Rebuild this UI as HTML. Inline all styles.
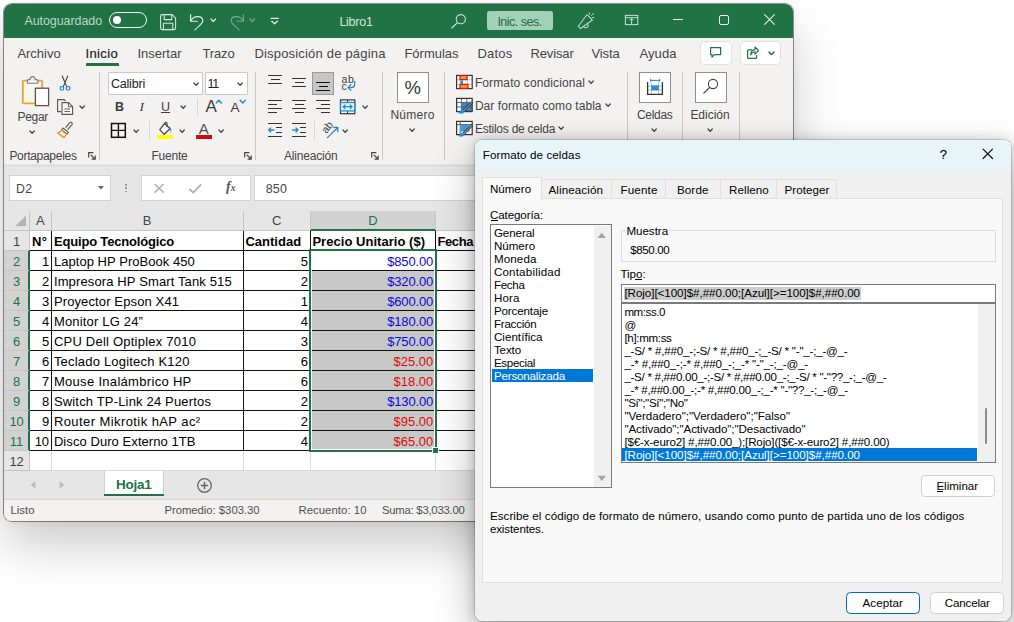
<!DOCTYPE html>
<html lang="es"><head><meta charset="utf-8"><title>Libro1 - Excel</title>
<style>
html,body{margin:0;padding:0}
body{width:1014px;height:622px;position:relative;overflow:hidden;background:#fff;font-family:"Liberation Sans",sans-serif;}
.b{position:absolute;display:block}
.t{position:absolute;white-space:pre;display:block}
#xlsh{position:absolute;left:4px;top:3.5px;width:789px;height:517.5px;border-radius:8px;box-shadow:0 0 0 1px rgba(0,0,0,.42),0 25px 50px rgba(0,0,0,.2),0 2px 10px rgba(0,0,0,.06);background:#f3f2f1}
#xl{position:absolute;left:4px;top:3.5px;width:789px;height:517.5px;border-radius:8px;overflow:hidden;background:#f3f2f1}
#xli{position:absolute;left:-4px;top:-3.5px;width:1014px;height:622px}
#dlsh{position:absolute;left:475px;top:139.6px;width:536px;height:481.6px;border-radius:8px;box-shadow:0 0 0 1px rgba(0,0,0,.13),0 16px 40px rgba(0,0,0,.3),0 0 12px rgba(0,0,0,.2);background:#f0f0f0}
#dl{position:absolute;left:475px;top:139.6px;width:536px;height:481.6px;border-radius:8px;overflow:hidden;background:#f0f0f0}
#dli{position:absolute;left:-475px;top:-139.6px;width:1014px;height:622px}
</style></head>
<body>
<div id="xlsh"></div>
<div id="xl"><div id="xli">
<div class="b" style="left:4px;top:3px;width:789px;height:35px;background:#217346;"></div>
<span class="t" style="top:12px;height:18px;line-height:18px;font-size:12.5px;color:#b8d7c6;left:24.40px;letter-spacing:-0.070px;">Autoguardado</span>
<div class="b" style="left:109px;top:12px;width:38px;height:16px;border:1.3px solid #eef5f1;border-radius:8px;box-sizing:border-box;"></div>
<div class="b" style="left:112.8px;top:15.8px;width:8.400000000000006px;height:8.399999999999999px;background:#fff;border-radius:50%;"></div>
<svg class="b" style="left:158.5px;top:13px;" width="18" height="18" viewBox="0 0 18 18"><path d="M1.6 3.1 Q1.6 1.6 3.1 1.6 H13.2 L16.6 5 V15.1 Q16.6 16.6 15.1 16.6 H3.1 Q1.6 16.6 1.6 15.1 Z M5.2 1.6 V6.6 H12.8 V1.6 M4.4 16.6 V10.2 H13.8 V16.6" fill="none" stroke="#d9e9e0" stroke-width="1.05" stroke-linejoin="round"/></svg>
<svg class="b" style="left:187px;top:12px;" width="20" height="20" viewBox="0 0 20 20"><path d="M3.6 2.6 V9.2 H10.2" fill="none" stroke="#e2eee8" stroke-width="1.15" stroke-linecap="round" stroke-linejoin="round"/><path d="M3.8 9 C6.5 3.4 15.6 3 15.8 8.8 C15.8 11.4 13.4 12.6 8 17.8" fill="none" stroke="#e2eee8" stroke-width="1.15" stroke-linecap="round"/></svg>
<svg class="b" style="left:209.9px;top:18.3px;" width="6.6" height="4.6" viewBox="0 0 6.6 4.6"><path d="M1 1 L3.3 3.6 L5.6 1" fill="none" stroke="#e2eee8" stroke-width="1.2" stroke-linecap="round" stroke-linejoin="round"/></svg>
<svg class="b" style="left:227px;top:12px;" width="20" height="20" viewBox="0 0 20 20"><path d="M16.4 2.6 V9.2 H9.8" fill="none" stroke="#73a88b" stroke-width="1.15" stroke-linecap="round" stroke-linejoin="round"/><path d="M16.2 9 C13.5 3.4 4.4 3 4.2 8.8 C4.2 11.4 6.6 12.6 12 17.8" fill="none" stroke="#73a88b" stroke-width="1.15" stroke-linecap="round"/></svg>
<svg class="b" style="left:248.5px;top:18.3px;" width="6.6" height="4.6" viewBox="0 0 6.6 4.6"><path d="M1 1 L3.3 3.6 L5.6 1" fill="none" stroke="#73a88b" stroke-width="1.2" stroke-linecap="round" stroke-linejoin="round"/></svg>
<svg class="b" style="left:269px;top:16px;" width="12" height="10" viewBox="0 0 12 10"><path d="M2 2.3 H9.2" stroke="#e2eee8" stroke-width="1.2" stroke-linecap="round"/><path d="M2.8 5.2 L5.6 7.8 L8.4 5.2" fill="none" stroke="#e2eee8" stroke-width="1.2" stroke-linecap="round" stroke-linejoin="round"/></svg>
<span class="t" style="top:13px;height:18px;line-height:18px;font-size:12.5px;color:#d3e6da;left:339.40px;letter-spacing:-0.258px;">Libro1</span>
<svg class="b" style="left:450px;top:13px;" width="18" height="16" viewBox="0 0 18 16"><circle cx="10.8" cy="6.2" r="4.6" fill="none" stroke="#cfe4d8" stroke-width="1.1"/><path d="M7.5 9.6 L1.8 15" stroke="#cfe4d8" stroke-width="1.15" stroke-linecap="round"/></svg>
<div class="b" style="left:487px;top:11px;width:65.5px;height:18.5px;background:#a3d0b8;border-radius:2.5px;"></div>
<span class="t" style="top:13px;height:18px;line-height:18px;font-size:12.5px;color:#1f6f43;left:497.40px;letter-spacing:-0.512px;">Inic. ses.</span>
<svg class="b" style="left:577px;top:11px;" width="19" height="19" viewBox="0 0 19 19"><path d="M1.3 15.3 L9.9 3.7 L15.4 9 L3.6 17.5 Z" fill="none" stroke="#bcd9c9" stroke-width="1.05" stroke-linejoin="round"/><path d="M6.6 15.5 A2.1 2.1 0 0 0 10.7 13.2" fill="none" stroke="#bcd9c9" stroke-width="1.05"/><path d="M12.3 1.8 L12.7 3.4 M14.5 4.6 L16.7 2.3 M15.3 6.5 L17 6.7" stroke="#bcd9c9" stroke-width="1" stroke-linecap="round"/></svg>
<svg class="b" style="left:624px;top:14px;" width="16" height="12" viewBox="0 0 16 12"><rect x="1.4" y="1.4" width="12.4" height="9.2" fill="none" stroke="#c3decf" stroke-width="1.05"/><path d="M1.4 3.7 H13.8 M7.6 10.4 V4.6 M5.8 6.3 L7.6 4.5 L9.4 6.3" fill="none" stroke="#c3decf" stroke-width="1"/></svg>
<div class="b" style="left:673px;top:18.7px;width:9.5px;height:1.1000000000000014px;background:#e4efe9;"></div>
<div class="b" style="left:719px;top:15px;width:9.5px;height:9.5px;border:1.1px solid #e4efe9;border-radius:2px;box-sizing:border-box;"></div>
<svg class="b" style="left:763px;top:13px;" width="13" height="13" viewBox="0 0 13 13"><path d="M1.6 1.6 L11.4 11.4 M11.4 1.6 L1.6 11.4" stroke="#e4efe9" stroke-width="1.1" stroke-linecap="round"/></svg>
<div class="b" style="left:4px;top:38px;width:789px;height:128px;background:#f3f2f1;"></div>
<span class="t" style="top:44px;height:19px;line-height:19px;font-size:13px;color:#444;left:17.40px;letter-spacing:-0.021px;">Archivo</span>
<span class="t" style="top:44px;height:19px;line-height:19px;font-size:13px;color:#444;left:137.40px;letter-spacing:0.016px;">Insertar</span>
<span class="t" style="top:44px;height:19px;line-height:19px;font-size:13px;color:#444;left:202.40px;letter-spacing:-0.110px;">Trazo</span>
<span class="t" style="top:44px;height:19px;line-height:19px;font-size:13px;color:#444;left:254.40px;letter-spacing:0.190px;">Disposición de página</span>
<span class="t" style="top:44px;height:19px;line-height:19px;font-size:13px;color:#444;left:404.40px;letter-spacing:0.003px;">Fórmulas</span>
<span class="t" style="top:44px;height:19px;line-height:19px;font-size:13px;color:#444;left:477.40px;letter-spacing:0.248px;">Datos</span>
<span class="t" style="top:44px;height:19px;line-height:19px;font-size:13px;color:#444;left:530.40px;letter-spacing:-0.124px;">Revisar</span>
<span class="t" style="top:44px;height:19px;line-height:19px;font-size:13px;color:#444;left:591.40px;letter-spacing:-0.094px;">Vista</span>
<span class="t" style="top:44px;height:19px;line-height:19px;font-size:13px;color:#444;left:639.40px;letter-spacing:0.114px;">Ayuda</span>
<span class="t" style="top:44px;height:19px;line-height:19px;font-size:13px;color:#222;left:85.40px;letter-spacing:0.392px;-webkit-text-stroke:0.2px #222;">Inicio</span>
<div class="b" style="left:86px;top:62.6px;width:32.5px;height:2.999999999999993px;background:#217346;border-radius:0.5px;"></div>
<div class="b" style="left:700px;top:41px;width:31.5px;height:23.5px;background:#fff;border:1px solid #e1e1e1;border-radius:4px;box-sizing:border-box;"></div>
<svg class="b" style="left:709px;top:46px;" width="14" height="13" viewBox="0 0 14 13"><path d="M1.6 1.6 H11.6 V8.6 H5.6 L3 11.2 V8.6 H1.6 Z" fill="none" stroke="#217346" stroke-width="1.2" stroke-linejoin="round"/></svg>
<div class="b" style="left:739.8px;top:41px;width:40.80000000000007px;height:23.5px;background:#fff;border:1px solid #e1e1e1;border-radius:4px;box-sizing:border-box;"></div>
<svg class="b" style="left:746px;top:45px;" width="14" height="15" viewBox="0 0 14 15"><path d="M5.6 4.8 H2.6 Q1.6 4.8 1.6 5.8 V12.4 Q1.6 13.4 2.6 13.4 H9.6 Q10.6 13.4 10.6 12.4 V10.4" fill="none" stroke="#217346" stroke-width="1.2" stroke-linecap="round"/><path d="M4.6 10 C4.8 6.6 6.6 4.8 9 4.6 V2 L12.6 5.6 L9 9.2 V6.8 C7 6.8 5.6 7.8 4.6 10 Z" fill="none" stroke="#217346" stroke-width="1.1" stroke-linejoin="round"/></svg>
<svg class="b" style="left:768.3px;top:50.6px;" width="7" height="4.8" viewBox="0 0 7 4.8"><path d="M1 1 L3.5 3.8 L6 1" fill="none" stroke="#217346" stroke-width="1.4" stroke-linecap="round" stroke-linejoin="round"/></svg>
<div class="b" style="left:99.0px;top:72px;width:1.0px;height:88px;background:#c8c8c8;"></div>
<div class="b" style="left:255.0px;top:72px;width:1.0px;height:88px;background:#c8c8c8;"></div>
<div class="b" style="left:381.5px;top:72px;width:1.0px;height:88px;background:#c8c8c8;"></div>
<div class="b" style="left:443.5px;top:72px;width:1.0px;height:88px;background:#c8c8c8;"></div>
<div class="b" style="left:626.5px;top:72px;width:1.0px;height:88px;background:#c8c8c8;"></div>
<div class="b" style="left:682.0px;top:72px;width:1.0px;height:88px;background:#c8c8c8;"></div>
<div class="b" style="left:738.5px;top:72px;width:1.0px;height:88px;background:#c8c8c8;"></div>
<svg class="b" style="left:20px;top:74px;" width="31" height="34" viewBox="0 0 31 34"><rect x="2.8" y="6.6" width="19.4" height="22.8" rx="0.8" fill="#fbf6ec"/><path d="M8.4 6.6 H3.6 Q2.8 6.6 2.8 7.4 V28.6 Q2.8 29.4 3.6 29.4 H15" fill="none" stroke="#e8a33d" stroke-width="1.8"/><path d="M17 6.6 H21.4 Q22.2 6.6 22.2 7.4 V14" fill="none" stroke="#e8a33d" stroke-width="1.8"/><path d="M7.4 9.2 V6.6 Q7.4 5.6 8.4 5.6 H10 Q10.2 2.6 12.6 2.6 Q15 2.6 15.2 5.6 H16.8 Q17.8 5.6 17.8 6.6 V9.2 Z" fill="#f3f3f3" stroke="#7a7a7a" stroke-width="1.1" stroke-linejoin="round"/><rect x="15.4" y="14.2" width="13.2" height="17.4" fill="#fff" stroke="#555" stroke-width="1.3"/></svg>
<span class="t" style="top:108px;height:18px;line-height:18px;font-size:12px;color:#444;left:17.40px;letter-spacing:-0.264px;">Pegar</span>
<svg class="b" style="left:29.15px;top:130.2px;" width="6.3" height="4.4" viewBox="0 0 6.3 4.4"><path d="M1 1 L3.15 3.4 L5.3 1" fill="none" stroke="#444" stroke-width="1.3" stroke-linecap="round" stroke-linejoin="round"/></svg>
<svg class="b" style="left:58px;top:74px;" width="14" height="18" viewBox="0 0 14 18"><path d="M4.2 2 L8.6 12.4 M9.8 2 L5.4 12.4" stroke="#444" stroke-width="1.1" stroke-linecap="round"/><rect x="2.2" y="12.6" width="3.4" height="3.4" rx="1" fill="none" stroke="#1e8bcd" stroke-width="1.2"/><rect x="8.4" y="12.6" width="3.4" height="3.4" rx="1" fill="none" stroke="#1e8bcd" stroke-width="1.2"/></svg>
<svg class="b" style="left:56px;top:98px;" width="18" height="18" viewBox="0 0 18 18"><path d="M5 13.6 H1.6 V1.6 H8 L9.6 3.2" fill="none" stroke="#555" stroke-width="1.1"/><path d="M6 4.6 H12.6 L16.6 8.6 V16.4 H6 Z" fill="#fff" stroke="#555" stroke-width="1.1" stroke-linejoin="round"/><path d="M12.4 4.8 V8.8 H16.4" fill="none" stroke="#555" stroke-width="1"/><path d="M8.4 11 H14 M8.4 13.6 H14" stroke="#555" stroke-width="1"/></svg>
<svg class="b" style="left:79.35px;top:104.8px;" width="6.3" height="4.4" viewBox="0 0 6.3 4.4"><path d="M1 1 L3.15 3.4 L5.3 1" fill="none" stroke="#444" stroke-width="1.3" stroke-linecap="round" stroke-linejoin="round"/></svg>
<svg class="b" style="left:56px;top:121px;" width="18" height="18" viewBox="0 0 18 18"><path d="M9.6 6.6 L13.8 1.6 Q15 0.8 16 1.8 Q16.8 2.8 15.8 3.8 L11.6 8.6" fill="none" stroke="#555" stroke-width="1.1" stroke-linejoin="round"/><path d="M7 7 L12.4 11.4 L11 13 L5.6 8.6 Z" fill="#fff" stroke="#555" stroke-width="1.1" stroke-linejoin="round"/><path d="M5.4 9 L10.6 13.2 L8 16.6 L1.6 12 Q4.4 11.6 5.4 9 Z" fill="none" stroke="#e8913d" stroke-width="1.3" stroke-linejoin="round"/></svg>
<span class="t" style="top:147px;height:18px;line-height:18px;font-size:12px;color:#444;left:9.40px;letter-spacing:-0.293px;">Portapapeles</span>
<svg class="b" style="left:87.5px;top:152px;" width="9" height="9" viewBox="0 0 9 9"><path d="M0.7 5.4 V0.7 H5.4" fill="none" stroke="#444" stroke-width="1.2"/><path d="M2.8 2.8 L7 7 M7.2 3.6 V7.2 H3.6" fill="none" stroke="#444" stroke-width="1.2"/></svg>
<div class="b" style="left:108px;top:72.3px;width:94.5px;height:22.400000000000006px;background:#fff;border:1px solid #c9c9c9;box-sizing:border-box;border-radius:1px;"></div>
<span class="t" style="top:75px;height:18px;line-height:18px;font-size:12.5px;color:#222;left:110.90px;letter-spacing:-0.175px;">Calibri</span>
<svg class="b" style="left:192.85px;top:82.1px;" width="6.3" height="4.4" viewBox="0 0 6.3 4.4"><path d="M1 1 L3.15 3.4 L5.3 1" fill="none" stroke="#444" stroke-width="1.3" stroke-linecap="round" stroke-linejoin="round"/></svg>
<div class="b" style="left:205.3px;top:72.3px;width:42.39999999999998px;height:22.400000000000006px;background:#fff;border:1px solid #c9c9c9;box-sizing:border-box;border-radius:1px;"></div>
<span class="t" style="top:75px;height:18px;line-height:18px;font-size:12.5px;color:#222;left:207.40px;letter-spacing:-1.2px;">11</span>
<svg class="b" style="left:237.45px;top:82.1px;" width="6.3" height="4.4" viewBox="0 0 6.3 4.4"><path d="M1 1 L3.15 3.4 L5.3 1" fill="none" stroke="#444" stroke-width="1.3" stroke-linecap="round" stroke-linejoin="round"/></svg>
<span class="t" style="top:98px;height:18px;line-height:18px;font-size:12.5px;color:#3b3b3b;font-weight:700;left:114.90px;letter-spacing:-0.827px;">B</span>
<span class="t" style="top:97px;height:19px;line-height:19px;font-size:13.5px;color:#3b3b3b;font-style:italic;font-family:&quot;Liberation Serif&quot;,serif;left:139.40px;">I</span>
<span class="t" style="top:98px;height:18px;line-height:18px;font-size:12.5px;color:#3b3b3b;left:161.00px;letter-spacing:0.173px;">U</span>
<div class="b" style="left:161px;top:112.4px;width:9.400000000000006px;height:1.0px;background:#3b3b3b;"></div>
<svg class="b" style="left:180.45px;top:104.8px;" width="6.3" height="4.4" viewBox="0 0 6.3 4.4"><path d="M1 1 L3.15 3.4 L5.3 1" fill="none" stroke="#444" stroke-width="1.3" stroke-linecap="round" stroke-linejoin="round"/></svg>
<div class="b" style="left:196.5px;top:97.5px;width:1.0px;height:18.5px;background:#d6d6d6;"></div>
<span class="t" style="top:95px;height:23px;line-height:23px;font-size:17px;color:#3b3b3b;left:205.40px;letter-spacing:1.061px;">A</span>
<svg class="b" style="left:215px;top:99.4px;" width="8" height="5" viewBox="0 0 8 5"><path d="M1.2 4 L3.8 1.2 L6.4 4" fill="none" stroke="#1e8bcd" stroke-width="1.4" stroke-linecap="round" stroke-linejoin="round"/></svg>
<span class="t" style="top:98px;height:19px;line-height:19px;font-size:13.5px;color:#3b3b3b;left:230.40px;letter-spacing:1.695px;">A</span>
<svg class="b" style="left:239px;top:99.4px;" width="8" height="5" viewBox="0 0 8 5"><path d="M1.2 1.2 L3.8 4 L6.4 1.2" fill="none" stroke="#1e8bcd" stroke-width="1.4" stroke-linecap="round" stroke-linejoin="round"/></svg>
<svg class="b" style="left:110px;top:122px;" width="17" height="17" viewBox="0 0 17 17"><rect x="1.5" y="1.5" width="13.8" height="13.8" fill="none" stroke="#111" stroke-width="1.5"/><path d="M8.4 1.4 V15.2 M1.4 8.4 H15.2" stroke="#111" stroke-width="1.4"/></svg>
<svg class="b" style="left:133.45px;top:129.1px;" width="6.3" height="4.4" viewBox="0 0 6.3 4.4"><path d="M1 1 L3.15 3.4 L5.3 1" fill="none" stroke="#444" stroke-width="1.3" stroke-linecap="round" stroke-linejoin="round"/></svg>
<div class="b" style="left:148.5px;top:121px;width:1.0px;height:19px;background:#d6d6d6;"></div>
<svg class="b" style="left:158px;top:121px;" width="16" height="15" viewBox="0 0 16 15"><path d="M1.7 8.7 L6.7 2.5 L11.9 7.7 L6.2 13.3 Z" fill="#fafafa" stroke="#444" stroke-width="1.2" stroke-linejoin="round"/><path d="M6.7 2.6 C6.8 0.9 9.1 0.9 9.1 2.8 V5.6" fill="none" stroke="#444" stroke-width="1.1" stroke-linecap="round"/><path d="M11.4 5.4 C13.6 7 14 10 12.6 12.2 C12.8 9.8 12.4 8.4 10.8 7 Z" fill="#1e8bcd"/></svg>
<div class="b" style="left:157px;top:135px;width:15.800000000000011px;height:4px;background:#ffff00;"></div>
<svg class="b" style="left:178.85px;top:129.1px;" width="6.3" height="4.4" viewBox="0 0 6.3 4.4"><path d="M1 1 L3.15 3.4 L5.3 1" fill="none" stroke="#444" stroke-width="1.3" stroke-linecap="round" stroke-linejoin="round"/></svg>
<span class="t" style="top:118px;height:21px;line-height:21px;font-size:15px;color:#505050;left:198.80px;letter-spacing:0.595px;">A</span>
<div class="b" style="left:195.8px;top:135px;width:16.0px;height:4px;background:#cf0a0a;"></div>
<svg class="b" style="left:218.25px;top:129.1px;" width="6.3" height="4.4" viewBox="0 0 6.3 4.4"><path d="M1 1 L3.15 3.4 L5.3 1" fill="none" stroke="#444" stroke-width="1.3" stroke-linecap="round" stroke-linejoin="round"/></svg>
<span class="t" style="top:147px;height:18px;line-height:18px;font-size:12px;color:#444;left:151.40px;letter-spacing:-0.193px;">Fuente</span>
<svg class="b" style="left:244px;top:152px;" width="9" height="9" viewBox="0 0 9 9"><path d="M0.7 5.4 V0.7 H5.4" fill="none" stroke="#444" stroke-width="1.2"/><path d="M2.8 2.8 L7 7 M7.2 3.6 V7.2 H3.6" fill="none" stroke="#444" stroke-width="1.2"/></svg>
<svg class="b" style="left:267px;top:74px;" width="16" height="16" viewBox="0 0 16 16"><path d="M1 1.5 H15" stroke="#333" stroke-width="1" shape-rendering="crispEdges"/><path d="M3.5 5.5 H12.5" stroke="#333" stroke-width="1" shape-rendering="crispEdges"/><path d="M1 9.5 H15" stroke="#333" stroke-width="1" shape-rendering="crispEdges"/></svg>
<svg class="b" style="left:291px;top:74px;" width="16" height="16" viewBox="0 0 16 16"><path d="M1 4.5 H15" stroke="#333" stroke-width="1" shape-rendering="crispEdges"/><path d="M3.5 8.5 H12.5" stroke="#333" stroke-width="1" shape-rendering="crispEdges"/><path d="M1 12.5 H15" stroke="#333" stroke-width="1" shape-rendering="crispEdges"/></svg>
<div class="b" style="left:312px;top:72px;width:22px;height:22.700000000000003px;background:#c6c6c6;border:1px solid #9a9a9a;box-sizing:border-box;"></div>
<svg class="b" style="left:315px;top:74px;" width="16" height="20" viewBox="0 0 16 20"><path d="M1 8.5 H15" stroke="#111" stroke-width="1.3" shape-rendering="crispEdges"/><path d="M3.5 12.5 H12.5" stroke="#111" stroke-width="1.3" shape-rendering="crispEdges"/><path d="M1 16.5 H15" stroke="#111" stroke-width="1.3" shape-rendering="crispEdges"/></svg>
<span class="t" style="top:71px;height:16px;line-height:16px;font-size:10.5px;color:#3b3b3b;left:341.40px;letter-spacing:0.760px;">ab</span>
<span class="t" style="top:78px;height:16px;line-height:16px;font-size:10.5px;color:#3b3b3b;left:341.40px;letter-spacing:0.950px;">c</span>
<svg class="b" style="left:346px;top:80px;" width="11" height="12" viewBox="0 0 11 12"><path d="M8.6 1 V4.6 Q8.6 7.6 5.6 7.6 H2.4" fill="none" stroke="#1e8bcd" stroke-width="1.3"/><path d="M4.8 4.8 L2 7.6 L4.8 10.4" fill="none" stroke="#1e8bcd" stroke-width="1.3" stroke-linecap="round" stroke-linejoin="round"/></svg>
<svg class="b" style="left:267px;top:99px;" width="16" height="16" viewBox="0 0 16 16"><path d="M1 1.5 H15" stroke="#333" stroke-width="1" shape-rendering="crispEdges"/><path d="M1 5.5 H10" stroke="#333" stroke-width="1" shape-rendering="crispEdges"/><path d="M1 9.5 H15" stroke="#333" stroke-width="1" shape-rendering="crispEdges"/><path d="M1 13.5 H10" stroke="#333" stroke-width="1" shape-rendering="crispEdges"/></svg>
<svg class="b" style="left:291px;top:99px;" width="16" height="16" viewBox="0 0 16 16"><path d="M1 1.5 H15" stroke="#333" stroke-width="1" shape-rendering="crispEdges"/><path d="M3.5 5.5 H12.5" stroke="#333" stroke-width="1" shape-rendering="crispEdges"/><path d="M1 9.5 H15" stroke="#333" stroke-width="1" shape-rendering="crispEdges"/><path d="M3.5 13.5 H12.5" stroke="#333" stroke-width="1" shape-rendering="crispEdges"/></svg>
<svg class="b" style="left:315px;top:99px;" width="16" height="16" viewBox="0 0 16 16"><path d="M1 1.5 H15" stroke="#333" stroke-width="1" shape-rendering="crispEdges"/><path d="M6 5.5 H15" stroke="#333" stroke-width="1" shape-rendering="crispEdges"/><path d="M1 9.5 H15" stroke="#333" stroke-width="1" shape-rendering="crispEdges"/><path d="M6 13.5 H15" stroke="#333" stroke-width="1" shape-rendering="crispEdges"/></svg>
<svg class="b" style="left:339px;top:99px;" width="17" height="16" viewBox="0 0 17 16"><rect x="1.5" y="0.9" width="14.3" height="13.8" fill="#fff" stroke="#333" stroke-width="1.2"/><path d="M8.6 0.9 V3.4 M8.6 11.9 V14.7" stroke="#333" stroke-width="1.1"/><rect x="1.5" y="3.5" width="14.3" height="8.4" fill="#e6f2fc" stroke="#1e8bcd" stroke-width="1.3"/><path d="M4.2 7.7 H13 M6 5.9 L4.2 7.7 L6 9.5 M11.2 5.9 L13 7.7 L11.2 9.5" fill="none" stroke="#1e8bcd" stroke-width="1.3" stroke-linecap="round" stroke-linejoin="round"/></svg>
<svg class="b" style="left:362.05px;top:104.8px;" width="6.3" height="4.4" viewBox="0 0 6.3 4.4"><path d="M1 1 L3.15 3.4 L5.3 1" fill="none" stroke="#444" stroke-width="1.3" stroke-linecap="round" stroke-linejoin="round"/></svg>
<svg class="b" style="left:267px;top:122px;" width="16" height="16" viewBox="0 0 16 16"><path d="M1 1.5 H15 M9 5.5 H15 M9 10.5 H15 M1 14.5 H15" stroke="#333" stroke-width="1" shape-rendering="crispEdges"/><path d="M1.6 8 H7 M3.6 6 L1.6 8 L3.6 10" fill="none" stroke="#1e8bcd" stroke-width="1.3" stroke-linecap="round" stroke-linejoin="round"/></svg>
<svg class="b" style="left:291px;top:122px;" width="16" height="16" viewBox="0 0 16 16"><path d="M1 1.5 H15 M9 5.5 H15 M9 10.5 H15 M1 14.5 H15" stroke="#333" stroke-width="1" shape-rendering="crispEdges"/><path d="M1.6 8 H7 M5 6 L7 8 L5 10" fill="none" stroke="#1e8bcd" stroke-width="1.3" stroke-linecap="round" stroke-linejoin="round"/></svg>
<div class="b" style="left:313.5px;top:121px;width:1.0px;height:19px;background:#d6d6d6;"></div>
<span class="t" style="left:321px;top:121px;font-size:10.5px;color:#3b3b3b;transform:rotate(-52deg);transform-origin:50% 50%;line-height:12px;">ab</span>
<svg class="b" style="left:326px;top:123px;" width="14" height="16" viewBox="0 0 14 16"><path d="M1.4 14.6 L11.4 4.8 M7.6 4.4 H11.8 V8.6" fill="none" stroke="#1e8bcd" stroke-width="1.3" stroke-linecap="round" stroke-linejoin="round"/></svg>
<svg class="b" style="left:342.35px;top:129.1px;" width="6.3" height="4.4" viewBox="0 0 6.3 4.4"><path d="M1 1 L3.15 3.4 L5.3 1" fill="none" stroke="#444" stroke-width="1.3" stroke-linecap="round" stroke-linejoin="round"/></svg>
<span class="t" style="top:147px;height:18px;line-height:18px;font-size:12px;color:#444;left:283.90px;letter-spacing:-0.167px;">Alineación</span>
<svg class="b" style="left:370.5px;top:152px;" width="9" height="9" viewBox="0 0 9 9"><path d="M0.7 5.4 V0.7 H5.4" fill="none" stroke="#444" stroke-width="1.2"/><path d="M2.8 2.8 L7 7 M7.2 3.6 V7.2 H3.6" fill="none" stroke="#444" stroke-width="1.2"/></svg>
<div class="b" style="left:397px;top:72px;width:31.5px;height:31px;background:#fff;border:1px solid #8f8f8f;box-sizing:border-box;"></div>
<span class="t" style="top:75px;height:25px;line-height:25px;font-size:18.5px;color:#333;left:404.40px;letter-spacing:-0.249px;">%</span>
<span class="t" style="top:106px;height:18px;line-height:18px;font-size:12px;color:#444;left:390.40px;letter-spacing:0.253px;">Número</span>
<svg class="b" style="left:408.65px;top:128.1px;" width="6.3" height="4.4" viewBox="0 0 6.3 4.4"><path d="M1 1 L3.15 3.4 L5.3 1" fill="none" stroke="#444" stroke-width="1.3" stroke-linecap="round" stroke-linejoin="round"/></svg>
<svg class="b" style="left:455px;top:74px;" width="19" height="16" viewBox="0 0 19 16"><rect x="1.6" y="1.4" width="15.6" height="13.2" fill="#fff"/><path d="M5 1.4 V14.6 M12.4 1.4 V14.6 M1.6 5.8 H17.2 M1.6 10.2 H17.2" stroke="#bdbdbd" stroke-width="0.9"/><rect x="1.6" y="1.4" width="15.6" height="13.2" fill="none" stroke="#333" stroke-width="1.2"/><rect x="5" y="1.6" width="7" height="4" fill="#f0a030" stroke="#e01515" stroke-width="1.2"/><rect x="5.4" y="6.4" width="2.6" height="3.4" fill="#2b8de0"/><rect x="5" y="10.4" width="8" height="4" fill="#f0a030" stroke="#e01515" stroke-width="1.2"/></svg>
<svg class="b" style="left:455px;top:97px;" width="19" height="19" viewBox="0 0 19 19"><rect x="1.6" y="1.4" width="15.6" height="13.2" fill="#fff"/><rect x="6.6" y="5.6" width="10.4" height="8.8" fill="#2b8de0"/><path d="M6.4 1.4 V14.6 M11.8 1.4 V14.6 M1.6 5.4 H17.2 M1.6 10 H17.2" stroke="#555" stroke-width="0.9"/><rect x="1.6" y="1.4" width="15.6" height="13.2" fill="none" stroke="#333" stroke-width="1.2"/><path d="M16.6 4.6 L17.8 5.8 L9.6 14 L8 12.6 Z" fill="#8a8a8a" stroke="#333" stroke-width="0.9" stroke-linejoin="round"/><path d="M8.2 12.4 Q5.8 12.2 5.2 14 Q4.6 15.6 2.8 15.8 Q6.4 17.6 8.8 15.8 Q10.4 14.4 9.6 13.8 Z" fill="#2b8de0"/></svg>
<svg class="b" style="left:455px;top:120px;" width="19" height="19" viewBox="0 0 19 19"><rect x="1.6" y="1.4" width="15.6" height="13.2" fill="#fff"/><path d="M5.2 1.4 V14.6 M1.6 4.6 H17.2" stroke="#555" stroke-width="0.9"/><rect x="5.6" y="5" width="9" height="6.6" fill="#3f9ae6"/><rect x="1.6" y="1.4" width="15.6" height="13.2" fill="none" stroke="#333" stroke-width="1.2"/><path d="M16.6 4.6 L17.8 5.8 L9.6 14 L8 12.6 Z" fill="#8a8a8a" stroke="#333" stroke-width="0.9" stroke-linejoin="round"/><path d="M8.2 12.4 Q5.8 12.2 5.2 14 Q4.6 15.6 2.8 15.8 Q6.4 17.6 8.8 15.8 Q10.4 14.4 9.6 13.8 Z" fill="#2b8de0"/></svg>
<span class="t" style="top:74px;height:18px;line-height:18px;font-size:12px;color:#444;left:474.90px;letter-spacing:0.113px;">Formato condicional</span>
<svg class="b" style="left:587.85px;top:80.2px;" width="6.3" height="4.4" viewBox="0 0 6.3 4.4"><path d="M1 1 L3.15 3.4 L5.3 1" fill="none" stroke="#444" stroke-width="1.3" stroke-linecap="round" stroke-linejoin="round"/></svg>
<span class="t" style="top:97px;height:18px;line-height:18px;font-size:12px;color:#444;left:474.90px;letter-spacing:0.060px;">Dar formato como tabla</span>
<svg class="b" style="left:604.85px;top:103.2px;" width="6.3" height="4.4" viewBox="0 0 6.3 4.4"><path d="M1 1 L3.15 3.4 L5.3 1" fill="none" stroke="#444" stroke-width="1.3" stroke-linecap="round" stroke-linejoin="round"/></svg>
<span class="t" style="top:120px;height:18px;line-height:18px;font-size:12px;color:#444;left:474.90px;letter-spacing:-0.240px;">Estilos de celda</span>
<svg class="b" style="left:557.85px;top:126.2px;" width="6.3" height="4.4" viewBox="0 0 6.3 4.4"><path d="M1 1 L3.15 3.4 L5.3 1" fill="none" stroke="#444" stroke-width="1.3" stroke-linecap="round" stroke-linejoin="round"/></svg>
<div class="b" style="left:639px;top:72px;width:32px;height:31px;background:#fff;border:1px solid #8f8f8f;box-sizing:border-box;"></div>
<svg class="b" style="left:646px;top:78px;" width="18" height="18" viewBox="0 0 18 18"><path d="M4.6 2.4 H13.6 M4.6 1 V3.8 M13.6 1 V3.8" stroke="#1e8bcd" stroke-width="1"/><path d="M5.4 4.4 V16 M12.6 4.4 V16 M1.6 8 H16.4 M1.6 12 H16.4" stroke="#b5b5b5" stroke-width="0.9"/><rect x="5.2" y="7.4" width="7.6" height="5" fill="#2b8de0"/><path d="M1.6 4 V16.4 H16.4 V4" fill="none" stroke="#333" stroke-width="1.3"/></svg>
<span class="t" style="top:106px;height:18px;line-height:18px;font-size:12px;color:#444;left:636.90px;letter-spacing:-0.276px;">Celdas</span>
<svg class="b" style="left:651.05px;top:128.1px;" width="6.3" height="4.4" viewBox="0 0 6.3 4.4"><path d="M1 1 L3.15 3.4 L5.3 1" fill="none" stroke="#444" stroke-width="1.3" stroke-linecap="round" stroke-linejoin="round"/></svg>
<div class="b" style="left:695px;top:72px;width:31.5px;height:31px;background:#fff;border:1px solid #8f8f8f;box-sizing:border-box;"></div>
<svg class="b" style="left:702px;top:78px;" width="18" height="17" viewBox="0 0 18 17"><circle cx="11" cy="6" r="4.6" fill="none" stroke="#444" stroke-width="1.1"/><path d="M7.6 9.4 L1.8 15.2" stroke="#444" stroke-width="1.2" stroke-linecap="round"/></svg>
<span class="t" style="top:106px;height:18px;line-height:18px;font-size:12px;color:#444;left:690.40px;letter-spacing:-0.022px;">Edición</span>
<svg class="b" style="left:706.85px;top:128.1px;" width="6.3" height="4.4" viewBox="0 0 6.3 4.4"><path d="M1 1 L3.15 3.4 L5.3 1" fill="none" stroke="#444" stroke-width="1.3" stroke-linecap="round" stroke-linejoin="round"/></svg>
<div class="b" style="left:4px;top:163.5px;width:789px;height:1.0px;background:#e3e3e3;"></div>
<div class="b" style="left:4px;top:165px;width:789px;height:46px;background:#e6e6e6;"></div>
<div class="b" style="left:4px;top:164.5px;width:789px;height:2.5px;background:linear-gradient(#d9d9d9,#e6e6e6);"></div>
<div class="b" style="left:9px;top:175px;width:101.5px;height:25.5px;background:#fff;border:1px solid #d2d2d2;box-sizing:border-box;"></div>
<span class="t" style="top:180px;height:18px;line-height:18px;font-size:12.3px;color:#444;left:15.90px;letter-spacing:0.388px;">D2</span>
<svg class="b" style="left:97px;top:185px;" width="8" height="6" viewBox="0 0 8 6"><path d="M0.8 1 H7 L3.9 4.6 Z" fill="#666"/></svg>
<div class="b" style="left:125.4px;top:184.2px;width:1.3999999999999915px;height:1.4000000000000057px;background:#9a9a9a;"></div>
<div class="b" style="left:125.4px;top:187.4px;width:1.3999999999999915px;height:1.4000000000000057px;background:#9a9a9a;"></div>
<div class="b" style="left:125.4px;top:190.6px;width:1.3999999999999915px;height:1.4000000000000057px;background:#9a9a9a;"></div>
<div class="b" style="left:141px;top:175px;width:109.5px;height:25.5px;background:#fff;border:1px solid #d2d2d2;box-sizing:border-box;"></div>
<svg class="b" style="left:153px;top:183px;" width="13" height="11" viewBox="0 0 13 11"><path d="M1.6 1 L10.6 9.6 M10.6 1 L1.6 9.6" stroke="#b0b0b0" stroke-width="1.6"/></svg>
<svg class="b" style="left:188px;top:183px;" width="15" height="11" viewBox="0 0 15 11"><path d="M1.4 6 L5.2 9.6 L13.2 1.4" fill="none" stroke="#b0b0b0" stroke-width="1.8"/></svg>
<span class="t" style="top:177px;height:20px;line-height:20px;font-size:14px;color:#555;font-weight:700;font-style:italic;font-family:&quot;Liberation Serif&quot;,serif;left:225.90px;">f</span>
<span class="t" style="top:181px;height:15px;line-height:15px;font-size:9.5px;color:#555;font-weight:700;font-style:italic;font-family:&quot;Liberation Serif&quot;,serif;left:230.80px;">x</span>
<div class="b" style="left:254px;top:175px;width:539px;height:25.5px;background:#fff;border:1px solid #d2d2d2;box-sizing:border-box;"></div>
<span class="t" style="top:180px;height:18px;line-height:18px;font-size:12.5px;color:#444;left:265.70px;letter-spacing:0.215px;">850</span>
<div class="b" style="left:4px;top:211px;width:789px;height:260px;background:#fff;"></div>
<div class="b" style="left:4px;top:211px;width:789px;height:19px;background:#e6e6e6;"></div>
<div class="b" style="left:4px;top:230px;width:789px;height:1px;background:#c6c6c6;"></div>
<div class="b" style="left:4px;top:231px;width:25px;height:240px;background:#e6e6e6;"></div>
<div class="b" style="left:29px;top:231px;width:1px;height:240px;background:#c6c6c6;"></div>
<div class="b" style="left:4px;top:251px;width:24px;height:200px;background:#d2d2d2;"></div>
<div class="b" style="left:28px;top:250px;width:2px;height:201px;background:#217346;"></div>
<div class="b" style="left:310px;top:211px;width:125px;height:18px;background:#d2d2d2;"></div>
<div class="b" style="left:310px;top:229px;width:126px;height:2px;background:#217346;"></div>
<div class="b" style="left:29px;top:211px;width:1px;height:19px;background:#c6c6c6;"></div>
<div class="b" style="left:51px;top:211px;width:1px;height:19px;background:#c6c6c6;"></div>
<div class="b" style="left:243px;top:211px;width:1px;height:19px;background:#c6c6c6;"></div>
<div class="b" style="left:310px;top:211px;width:1px;height:19px;background:#c6c6c6;"></div>
<div class="b" style="left:435px;top:211px;width:1px;height:19px;background:#c6c6c6;"></div>
<svg class="b" style="left:14px;top:215px;" width="13" height="12" viewBox="0 0 13 12"><path d="M12 0.6 V11.2 H1.2 Z" fill="#b4b4b4"/></svg>
<span class="t" style="top:211px;height:19px;line-height:19px;font-size:13px;color:#444;left:-59.70px;width:200px;text-align:center;">A</span>
<span class="t" style="top:211px;height:19px;line-height:19px;font-size:13px;color:#444;left:47.00px;width:200px;text-align:center;">B</span>
<span class="t" style="top:211px;height:19px;line-height:19px;font-size:13px;color:#444;left:176.80px;width:200px;text-align:center;">C</span>
<span class="t" style="top:211px;height:19px;line-height:19px;font-size:13px;color:#217346;left:273.00px;width:200px;text-align:center;">D</span>
<div class="b" style="left:4px;top:250px;width:25px;height:1px;background:#c6c6c6;"></div>
<div class="b" style="left:4px;top:270px;width:25px;height:1px;background:#c6c6c6;"></div>
<div class="b" style="left:4px;top:290px;width:25px;height:1px;background:#c6c6c6;"></div>
<div class="b" style="left:4px;top:310px;width:25px;height:1px;background:#c6c6c6;"></div>
<div class="b" style="left:4px;top:330px;width:25px;height:1px;background:#c6c6c6;"></div>
<div class="b" style="left:4px;top:350px;width:25px;height:1px;background:#c6c6c6;"></div>
<div class="b" style="left:4px;top:370px;width:25px;height:1px;background:#c6c6c6;"></div>
<div class="b" style="left:4px;top:390px;width:25px;height:1px;background:#c6c6c6;"></div>
<div class="b" style="left:4px;top:410px;width:25px;height:1px;background:#c6c6c6;"></div>
<div class="b" style="left:4px;top:430px;width:25px;height:1px;background:#c6c6c6;"></div>
<div class="b" style="left:4px;top:450px;width:25px;height:1px;background:#c6c6c6;"></div>
<div class="b" style="left:4px;top:470px;width:25px;height:1px;background:#c6c6c6;"></div>
<span class="t" style="top:232px;height:19px;line-height:19px;font-size:13px;color:#444;left:-83.40px;width:200px;text-align:center;">1</span>
<span class="t" style="top:252px;height:19px;line-height:19px;font-size:13px;color:#217346;left:-83.40px;width:200px;text-align:center;">2</span>
<span class="t" style="top:272px;height:19px;line-height:19px;font-size:13px;color:#217346;left:-83.40px;width:200px;text-align:center;">3</span>
<span class="t" style="top:292px;height:19px;line-height:19px;font-size:13px;color:#217346;left:-83.40px;width:200px;text-align:center;">4</span>
<span class="t" style="top:312px;height:19px;line-height:19px;font-size:13px;color:#217346;left:-83.40px;width:200px;text-align:center;">5</span>
<span class="t" style="top:332px;height:19px;line-height:19px;font-size:13px;color:#217346;left:-83.40px;width:200px;text-align:center;">6</span>
<span class="t" style="top:352px;height:19px;line-height:19px;font-size:13px;color:#217346;left:-83.40px;width:200px;text-align:center;">7</span>
<span class="t" style="top:372px;height:19px;line-height:19px;font-size:13px;color:#217346;left:-83.40px;width:200px;text-align:center;">8</span>
<span class="t" style="top:392px;height:19px;line-height:19px;font-size:13px;color:#217346;left:-83.40px;width:200px;text-align:center;">9</span>
<span class="t" style="top:412px;height:19px;line-height:19px;font-size:13px;color:#217346;left:-83.40px;width:200px;text-align:center;">10</span>
<span class="t" style="top:432px;height:19px;line-height:19px;font-size:13px;color:#217346;left:-83.40px;width:200px;text-align:center;">11</span>
<span class="t" style="top:452px;height:19px;line-height:19px;font-size:13px;color:#444;left:-83.40px;width:200px;text-align:center;">12</span>
<div class="b" style="left:51px;top:451px;width:1px;height:20px;background:#d8d8d8;"></div>
<div class="b" style="left:243px;top:451px;width:1px;height:20px;background:#d8d8d8;"></div>
<div class="b" style="left:310px;top:451px;width:1px;height:20px;background:#d8d8d8;"></div>
<div class="b" style="left:435px;top:451px;width:1px;height:20px;background:#d8d8d8;"></div>
<div class="b" style="left:30px;top:470px;width:763px;height:1px;background:#d8d8d8;"></div>
<div class="b" style="left:312px;top:271px;width:122px;height:178px;background:#c8c8c8;"></div>
<div class="b" style="left:30px;top:250px;width:763px;height:1px;background:#111;"></div>
<div class="b" style="left:30px;top:270px;width:763px;height:1px;background:#111;"></div>
<div class="b" style="left:30px;top:290px;width:763px;height:1px;background:#111;"></div>
<div class="b" style="left:30px;top:310px;width:763px;height:1px;background:#111;"></div>
<div class="b" style="left:30px;top:330px;width:763px;height:1px;background:#111;"></div>
<div class="b" style="left:30px;top:350px;width:763px;height:1px;background:#111;"></div>
<div class="b" style="left:30px;top:370px;width:763px;height:1px;background:#111;"></div>
<div class="b" style="left:30px;top:390px;width:763px;height:1px;background:#111;"></div>
<div class="b" style="left:30px;top:410px;width:763px;height:1px;background:#111;"></div>
<div class="b" style="left:30px;top:430px;width:763px;height:1px;background:#111;"></div>
<div class="b" style="left:30px;top:450px;width:763px;height:1px;background:#111;"></div>
<div class="b" style="left:51px;top:231px;width:1px;height:220px;background:#111;"></div>
<div class="b" style="left:243px;top:231px;width:1px;height:220px;background:#111;"></div>
<div class="b" style="left:310px;top:231px;width:1px;height:220px;background:#111;"></div>
<div class="b" style="left:435px;top:231px;width:1px;height:220px;background:#111;"></div>
<div class="b" style="left:311px;top:251px;width:1px;height:199px;background:#fff;"></div>
<div class="b" style="left:434px;top:251px;width:1px;height:199px;background:#fff;"></div>
<div class="b" style="left:309px;top:249px;width:128px;height:203px;border:2px solid #217346;box-sizing:border-box;"></div>
<div class="b" style="left:432px;top:447px;width:7px;height:7px;background:#fff;"></div>
<div class="b" style="left:433px;top:448px;width:5px;height:5px;background:#217346;"></div>
<div class="b" style="left:439px;top:450px;width:354px;height:1px;background:#111;"></div>
<span class="t" style="top:232px;height:19px;line-height:19px;font-size:13px;color:#000;font-weight:700;left:31.90px;letter-spacing:0.556px;">N°</span>
<span class="t" style="top:232px;height:19px;line-height:19px;font-size:13px;color:#000;font-weight:700;left:53.90px;letter-spacing:-0.170px;">Equipo Tecnológico</span>
<span class="t" style="top:232px;height:19px;line-height:19px;font-size:13px;color:#000;font-weight:700;left:245.40px;letter-spacing:0.011px;">Cantidad</span>
<span class="t" style="top:232px;height:19px;line-height:19px;font-size:13px;color:#000;font-weight:700;left:312.40px;letter-spacing:0.038px;">Precio Unitario ($)</span>
<span class="t" style="top:232px;height:19px;line-height:19px;font-size:13px;color:#000;font-weight:700;left:437.40px;letter-spacing:-0.375px;">Fecha</span>
<span class="t" style="top:252px;height:19px;line-height:19px;font-size:13px;color:#000;right:965.10px;letter-spacing:-0.2px;">1</span>
<span class="t" style="top:252px;height:19px;line-height:19px;font-size:13px;color:#000;left:53.90px;letter-spacing:0.049px;">Laptop HP ProBook 450</span>
<span class="t" style="top:252px;height:19px;line-height:19px;font-size:13px;color:#000;right:706.10px;">5</span>
<span class="t" style="top:252px;height:19px;line-height:19px;font-size:13px;color:#0808e0;left:387.20px;letter-spacing:-0.142px;">$850.00</span>
<span class="t" style="top:272px;height:19px;line-height:19px;font-size:13px;color:#000;right:965.10px;letter-spacing:-0.2px;">2</span>
<span class="t" style="top:272px;height:19px;line-height:19px;font-size:13px;color:#000;left:53.90px;letter-spacing:0.130px;">Impresora HP Smart Tank 515</span>
<span class="t" style="top:272px;height:19px;line-height:19px;font-size:13px;color:#000;right:706.10px;">2</span>
<span class="t" style="top:272px;height:19px;line-height:19px;font-size:13px;color:#0808e0;left:387.20px;letter-spacing:-0.142px;">$320.00</span>
<span class="t" style="top:292px;height:19px;line-height:19px;font-size:13px;color:#000;right:965.10px;letter-spacing:-0.2px;">3</span>
<span class="t" style="top:292px;height:19px;line-height:19px;font-size:13px;color:#000;left:53.90px;letter-spacing:0.124px;">Proyector Epson X41</span>
<span class="t" style="top:292px;height:19px;line-height:19px;font-size:13px;color:#000;right:706.10px;">1</span>
<span class="t" style="top:292px;height:19px;line-height:19px;font-size:13px;color:#0808e0;left:387.20px;letter-spacing:-0.142px;">$600.00</span>
<span class="t" style="top:312px;height:19px;line-height:19px;font-size:13px;color:#000;right:965.10px;letter-spacing:-0.2px;">4</span>
<span class="t" style="top:312px;height:19px;line-height:19px;font-size:13px;color:#000;left:53.90px;letter-spacing:0.178px;">Monitor LG 24”</span>
<span class="t" style="top:312px;height:19px;line-height:19px;font-size:13px;color:#000;right:706.10px;">4</span>
<span class="t" style="top:312px;height:19px;line-height:19px;font-size:13px;color:#0808e0;left:387.20px;letter-spacing:-0.142px;">$180.00</span>
<span class="t" style="top:332px;height:19px;line-height:19px;font-size:13px;color:#000;right:965.10px;letter-spacing:-0.2px;">5</span>
<span class="t" style="top:332px;height:19px;line-height:19px;font-size:13px;color:#000;left:53.90px;letter-spacing:0.223px;">CPU Dell Optiplex 7010</span>
<span class="t" style="top:332px;height:19px;line-height:19px;font-size:13px;color:#000;right:706.10px;">3</span>
<span class="t" style="top:332px;height:19px;line-height:19px;font-size:13px;color:#0808e0;left:387.20px;letter-spacing:-0.142px;">$750.00</span>
<span class="t" style="top:352px;height:19px;line-height:19px;font-size:13px;color:#000;right:965.10px;letter-spacing:-0.2px;">6</span>
<span class="t" style="top:352px;height:19px;line-height:19px;font-size:13px;color:#000;left:53.90px;letter-spacing:0.198px;">Teclado Logitech K120</span>
<span class="t" style="top:352px;height:19px;line-height:19px;font-size:13px;color:#000;right:706.10px;">6</span>
<span class="t" style="top:352px;height:19px;line-height:19px;font-size:13px;color:#e00808;left:393.60px;letter-spacing:-0.027px;">$25.00</span>
<span class="t" style="top:372px;height:19px;line-height:19px;font-size:13px;color:#000;right:965.10px;letter-spacing:-0.2px;">7</span>
<span class="t" style="top:372px;height:19px;line-height:19px;font-size:13px;color:#000;left:53.90px;letter-spacing:0.310px;">Mouse Inalámbrico HP</span>
<span class="t" style="top:372px;height:19px;line-height:19px;font-size:13px;color:#000;right:706.10px;">6</span>
<span class="t" style="top:372px;height:19px;line-height:19px;font-size:13px;color:#e00808;left:393.60px;letter-spacing:-0.027px;">$18.00</span>
<span class="t" style="top:392px;height:19px;line-height:19px;font-size:13px;color:#000;right:965.10px;letter-spacing:-0.2px;">8</span>
<span class="t" style="top:392px;height:19px;line-height:19px;font-size:13px;color:#000;left:53.90px;letter-spacing:0.170px;">Switch TP-Link 24 Puertos</span>
<span class="t" style="top:392px;height:19px;line-height:19px;font-size:13px;color:#000;right:706.10px;">2</span>
<span class="t" style="top:392px;height:19px;line-height:19px;font-size:13px;color:#0808e0;left:387.20px;letter-spacing:-0.142px;">$130.00</span>
<span class="t" style="top:412px;height:19px;line-height:19px;font-size:13px;color:#000;right:965.10px;letter-spacing:-0.2px;">9</span>
<span class="t" style="top:412px;height:19px;line-height:19px;font-size:13px;color:#000;left:53.90px;letter-spacing:0.420px;">Router Mikrotik hAP ac²</span>
<span class="t" style="top:412px;height:19px;line-height:19px;font-size:13px;color:#000;right:706.10px;">2</span>
<span class="t" style="top:412px;height:19px;line-height:19px;font-size:13px;color:#e00808;left:393.60px;letter-spacing:-0.027px;">$95.00</span>
<span class="t" style="top:432px;height:19px;line-height:19px;font-size:13px;color:#000;right:965.10px;letter-spacing:-0.2px;">10</span>
<span class="t" style="top:432px;height:19px;line-height:19px;font-size:13px;color:#000;left:53.90px;letter-spacing:0.070px;">Disco Duro Externo 1TB</span>
<span class="t" style="top:432px;height:19px;line-height:19px;font-size:13px;color:#000;right:706.10px;">4</span>
<span class="t" style="top:432px;height:19px;line-height:19px;font-size:13px;color:#e00808;left:393.60px;letter-spacing:-0.027px;">$65.00</span>
<div class="b" style="left:4px;top:471px;width:789px;height:28px;background:#e6e6e6;"></div>
<svg class="b" style="left:29px;top:480px;" width="8" height="10" viewBox="0 0 8 10"><path d="M6.4 1.2 L1.6 5 L6.4 8.8 Z" fill="#bdbdbd"/></svg>
<svg class="b" style="left:58px;top:480px;" width="8" height="10" viewBox="0 0 8 10"><path d="M1.6 1.2 L6.4 5 L1.6 8.8 Z" fill="#bdbdbd"/></svg>
<div class="b" style="left:104px;top:471px;width:59.5px;height:25px;background:#fff;"></div>
<div class="b" style="left:104px;top:471px;width:1px;height:25px;background:#cfcfcf;"></div>
<div class="b" style="left:163px;top:471px;width:1px;height:25px;background:#cfcfcf;"></div>
<div class="b" style="left:104px;top:494px;width:60px;height:2px;background:#217346;"></div>
<span class="t" style="top:475px;height:19px;line-height:19px;font-size:13.5px;color:#217346;font-weight:700;left:115.90px;letter-spacing:-0.212px;">Hoja1</span>
<svg class="b" style="left:196px;top:477px;" width="17" height="17" viewBox="0 0 17 17"><circle cx="8.5" cy="8.5" r="6.8" fill="none" stroke="#666" stroke-width="1.3"/><path d="M8.5 4.8 V12.2 M4.8 8.5 H12.2" stroke="#666" stroke-width="1.5"/></svg>
<div class="b" style="left:4px;top:499px;width:789px;height:22px;background:#f3f2f1;"></div>
<div class="b" style="left:4px;top:498.5px;width:789px;height:1.0px;background:#d4d4d4;"></div>
<span class="t" style="top:502px;height:16px;line-height:16px;font-size:11.3px;color:#505050;left:10.40px;letter-spacing:0.066px;">Listo</span>
<span class="t" style="top:502px;height:16px;line-height:16px;font-size:11.3px;color:#505050;left:164.40px;letter-spacing:-0.017px;">Promedio: $303.30</span>
<span class="t" style="top:502px;height:16px;line-height:16px;font-size:11.3px;color:#505050;left:298.40px;letter-spacing:0.082px;">Recuento: 10</span>
<span class="t" style="top:502px;height:16px;line-height:16px;font-size:11.3px;color:#505050;left:381.90px;letter-spacing:-0.224px;">Suma: $3,033.00</span>
</div></div>
<div id="dlsh"></div>
<div id="dl"><div id="dli">
<div class="b" style="left:475px;top:139px;width:536px;height:31px;background:#e7f5f8;"></div>
<span class="t" style="top:147px;height:16px;line-height:16px;font-size:11.6px;color:#000;left:482.70px;letter-spacing:0.108px;">Formato de celdas</span>
<span class="t" style="top:145px;height:19px;line-height:19px;font-size:13px;color:#000;left:939.80px;-webkit-text-stroke:0.15px #000;">?</span>
<svg class="b" style="left:981px;top:147.2px;" width="13" height="13" viewBox="0 0 13 13"><path d="M2.1 2.1 L11.5 11.5 M11.5 2.1 L2.1 11.5" stroke="#111" stroke-width="1.2" stroke-linecap="round"/></svg>
<div class="b" style="left:481.5px;top:198px;width:521.5px;height:384.5px;background:#f9f9f9;border:1px solid #dfdfdf;box-sizing:border-box;"></div>
<div class="b" style="left:541px;top:179px;width:71px;height:20px;background:#f0f0f0;border:1px solid #dfdfdf;box-sizing:border-box;"></div>
<span class="t" style="top:182px;height:16px;line-height:16px;font-size:11.6px;color:#000;left:548.40px;letter-spacing:0.118px;">Alineación</span>
<div class="b" style="left:611px;top:179px;width:55px;height:20px;background:#f0f0f0;border:1px solid #dfdfdf;box-sizing:border-box;"></div>
<span class="t" style="top:182px;height:16px;line-height:16px;font-size:11.6px;color:#000;left:620.40px;letter-spacing:0.181px;">Fuente</span>
<div class="b" style="left:665px;top:179px;width:55.5px;height:20px;background:#f0f0f0;border:1px solid #dfdfdf;box-sizing:border-box;"></div>
<span class="t" style="top:182px;height:16px;line-height:16px;font-size:11.6px;color:#000;left:676.90px;letter-spacing:0.149px;">Borde</span>
<div class="b" style="left:719.5px;top:179px;width:57.5px;height:20px;background:#f0f0f0;border:1px solid #dfdfdf;box-sizing:border-box;"></div>
<span class="t" style="top:182px;height:16px;line-height:16px;font-size:11.6px;color:#000;left:729.10px;letter-spacing:0.066px;">Relleno</span>
<div class="b" style="left:776px;top:179px;width:61px;height:20px;background:#f0f0f0;border:1px solid #dfdfdf;box-sizing:border-box;"></div>
<span class="t" style="top:182px;height:16px;line-height:16px;font-size:11.6px;color:#000;left:784.40px;letter-spacing:0.089px;">Proteger</span>
<div class="b" style="left:482px;top:176.8px;width:60px;height:23.19999999999999px;background:#f9f9f9;border:1px solid #dfdfdf;border-bottom:none;box-sizing:border-box;"></div>
<span class="t" style="top:181px;height:16px;line-height:16px;font-size:11.6px;color:#000;left:489.90px;letter-spacing:-0.009px;">Número</span>
<span class="t" style="top:207px;height:16px;line-height:16px;font-size:11.6px;color:#000;left:489.90px;letter-spacing:-0.096px;">Categoría:</span>
<div class="b" style="left:490.5px;top:220px;width:7.5px;height:1px;background:#000;"></div>
<div class="b" style="left:490px;top:224px;width:121.5px;height:263.5px;background:#fff;border:1px solid #7a7a7a;box-sizing:border-box;"></div>
<div class="b" style="left:593.5px;top:225.5px;width:17.0px;height:261.0px;background:#f0f0f0;"></div>
<svg class="b" style="left:597px;top:231.5px;" width="10" height="7" viewBox="0 0 10 7"><path d="M0.6 6 L4.8 0.8 L9 6 Z" fill="#a3a3a3"/></svg>
<svg class="b" style="left:597px;top:475px;" width="10" height="7" viewBox="0 0 10 7"><path d="M0.6 0.8 L4.8 6 L9 0.8 Z" fill="#a3a3a3"/></svg>
<div class="b" style="left:492px;top:369px;width:100.5px;height:12.5px;background:#0078d7;"></div>
<span class="t" style="top:225px;height:16px;line-height:16px;font-size:11.6px;color:#000;left:493.90px;letter-spacing:-0.081px;">General</span>
<span class="t" style="top:238px;height:16px;line-height:16px;font-size:11.6px;color:#000;left:493.90px;letter-spacing:-0.009px;">Número</span>
<span class="t" style="top:251px;height:16px;line-height:16px;font-size:11.6px;color:#000;left:493.90px;letter-spacing:0.130px;">Moneda</span>
<span class="t" style="top:264px;height:16px;line-height:16px;font-size:11.6px;color:#000;left:493.90px;letter-spacing:0.184px;">Contabilidad</span>
<span class="t" style="top:277px;height:16px;line-height:16px;font-size:11.6px;color:#000;left:493.90px;letter-spacing:-0.308px;">Fecha</span>
<span class="t" style="top:290px;height:16px;line-height:16px;font-size:11.6px;color:#000;left:493.90px;letter-spacing:0.140px;">Hora</span>
<span class="t" style="top:303px;height:16px;line-height:16px;font-size:11.6px;color:#000;left:493.90px;letter-spacing:-0.126px;">Porcentaje</span>
<span class="t" style="top:316px;height:16px;line-height:16px;font-size:11.6px;color:#000;left:493.90px;letter-spacing:-0.222px;">Fracción</span>
<span class="t" style="top:329px;height:16px;line-height:16px;font-size:11.6px;color:#000;left:493.90px;letter-spacing:0.035px;">Científica</span>
<span class="t" style="top:342px;height:16px;line-height:16px;font-size:11.6px;color:#000;left:493.90px;letter-spacing:-0.105px;">Texto</span>
<span class="t" style="top:355px;height:16px;line-height:16px;font-size:11.6px;color:#000;left:493.90px;letter-spacing:-0.331px;">Especial</span>
<span class="t" style="top:368px;height:16px;line-height:16px;font-size:11.6px;color:#fff;left:493.90px;letter-spacing:-0.178px;">Personalizada</span>
<div class="b" style="left:621px;top:230px;width:374.5px;height:31.5px;border:1px solid #dcdcdc;box-sizing:border-box;"></div>
<div class="b" style="left:625px;top:226px;width:45px;height:10px;background:#f9f9f9;"></div>
<span class="t" style="top:223px;height:16px;line-height:16px;font-size:11.6px;color:#000;left:626.40px;letter-spacing:-0.029px;">Muestra</span>
<span class="t" style="top:242px;height:16px;line-height:16px;font-size:11.6px;color:#000;left:630.20px;letter-spacing:-0.390px;">$850.00</span>
<span class="t" style="top:266px;height:16px;line-height:16px;font-size:11.6px;color:#000;left:620.40px;letter-spacing:-0.031px;">Tipo:</span>
<div class="b" style="left:635px;top:279px;width:6.5px;height:1px;background:#000;"></div>
<div class="b" style="left:621px;top:283.5px;width:375px;height:19.5px;background:#fff;border:1px solid #7a7a7a;box-sizing:border-box;"></div>
<div class="b" style="left:624px;top:286.5px;width:236.5px;height:13.0px;background:#cdcdcd;"></div>
<span class="t" style="top:285px;height:16px;line-height:16px;font-size:11.6px;color:#000;left:624.40px;letter-spacing:-0.045px;">[Rojo][&lt;100]$#,##0.00;[Azul][&gt;=100]$#,##0.00</span>
<div class="b" style="left:621px;top:302.5px;width:375px;height:160.5px;background:#fff;border:1px solid #7a7a7a;box-sizing:border-box;"></div>
<div class="b" style="left:978px;top:303.5px;width:17px;height:158.5px;background:#f0f0f0;"></div>
<div class="b" style="left:985px;top:408px;width:2.2000000000000455px;height:35.60000000000002px;background:#8b8b8b;border-radius:1px;"></div>
<div class="b" style="left:622px;top:448px;width:355px;height:13.199999999999989px;background:#0078d7;"></div>
<span class="t" style="top:304px;height:16px;line-height:16px;font-size:11.6px;color:#000;left:624.40px;letter-spacing:-0.446px;">mm:ss.0</span>
<span class="t" style="top:317px;height:16px;line-height:16px;font-size:11.6px;color:#000;left:624.40px;letter-spacing:-0.575px;">@</span>
<span class="t" style="top:330px;height:16px;line-height:16px;font-size:11.6px;color:#000;left:624.40px;letter-spacing:-0.341px;">[h]:mm:ss</span>
<span class="t" style="top:343px;height:16px;line-height:16px;font-size:11.6px;color:#000;left:624.40px;letter-spacing:-0.217px;">_-S/ * #,##0_-;-S/ * #,##0_-;_-S/ * "-"_-;_-@_-</span>
<span class="t" style="top:356px;height:16px;line-height:16px;font-size:11.6px;color:#000;left:624.40px;letter-spacing:-0.188px;">_-* #,##0_-;-* #,##0_-;_-* "-"_-;_-@_-</span>
<span class="t" style="top:369px;height:16px;line-height:16px;font-size:11.6px;color:#000;left:624.40px;letter-spacing:-0.297px;">_-S/ * #,##0.00_-;-S/ * #,##0.00_-;_-S/ * "-"??_-;_-@_-</span>
<span class="t" style="top:382px;height:16px;line-height:16px;font-size:11.6px;color:#000;left:624.40px;letter-spacing:-0.268px;">_-* #,##0.00_-;-* #,##0.00_-;_-* "-"??_-;_-@_-</span>
<span class="t" style="top:395px;height:16px;line-height:16px;font-size:11.6px;color:#000;left:624.40px;letter-spacing:-0.335px;">"Sí";"Sí";"No"</span>
<span class="t" style="top:408px;height:16px;line-height:16px;font-size:11.6px;color:#000;left:624.40px;letter-spacing:-0.028px;">"Verdadero";"Verdadero";"Falso"</span>
<span class="t" style="top:421px;height:16px;line-height:16px;font-size:11.6px;color:#000;left:624.40px;letter-spacing:-0.079px;">"Activado";"Activado";"Desactivado"</span>
<span class="t" style="top:434px;height:16px;line-height:16px;font-size:11.6px;color:#000;left:624.40px;letter-spacing:-0.155px;">[$€-x-euro2] #,##0.00_);[Rojo]([$€-x-euro2] #,##0.00)</span>
<span class="t" style="top:447px;height:16px;line-height:16px;font-size:11.6px;color:#fff;left:624.40px;letter-spacing:-0.045px;">[Rojo][&lt;100]$#,##0.00;[Azul][&gt;=100]$#,##0.00</span>
<div class="b" style="left:921px;top:475px;width:73.5px;height:21.5px;background:#fdfdfd;border:1px solid #d0d0d0;border-radius:4px;box-sizing:border-box;"></div>
<span class="t" style="top:478px;height:16px;line-height:16px;font-size:11.6px;color:#000;left:936.40px;letter-spacing:-0.024px;">Eliminar</span>
<div class="b" style="left:937px;top:491px;width:6px;height:1px;background:#000;"></div>
<span class="t" style="top:508px;height:16px;line-height:16px;font-size:11.6px;color:#000;left:489.90px;letter-spacing:0.068px;">Escribe el código de formato de número, usando como punto de partida uno de los códigos</span>
<span class="t" style="top:521px;height:16px;line-height:16px;font-size:11.6px;color:#000;left:489.90px;letter-spacing:-0.132px;">existentes.</span>
<div class="b" style="left:846px;top:592px;width:73.5px;height:21.5px;background:#fdfdfd;border:1.5px solid #0067c0;border-radius:4.5px;box-sizing:border-box;"></div>
<span class="t" style="top:595px;height:16px;line-height:16px;font-size:11.6px;color:#000;left:862.60px;letter-spacing:0.046px;">Aceptar</span>
<div class="b" style="left:930px;top:592px;width:73.5px;height:21.5px;background:#fdfdfd;border:1px solid #d0d0d0;border-radius:4.5px;box-sizing:border-box;"></div>
<span class="t" style="top:595px;height:16px;line-height:16px;font-size:11.6px;color:#000;left:944.80px;letter-spacing:-0.178px;">Cancelar</span>
</div></div>
</body></html>
